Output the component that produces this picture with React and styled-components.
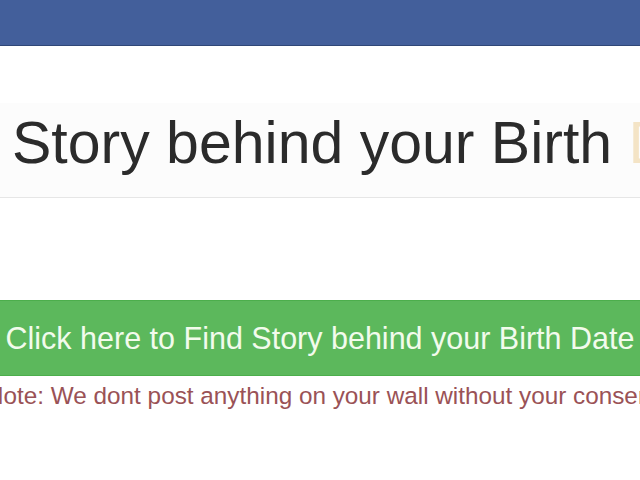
import React from 'react';
import styled, { createGlobalStyle } from 'styled-components';

const GlobalStyle = createGlobalStyle`
    html, body {
        margin: 0;
        padding: 0;
        background: #ffffff;
        overflow: hidden;
    }
    body {
        font-family: "Liberation Sans", Arial, sans-serif;
    }
`;

const Page = styled.div`
    width: 640px;
    height: 480px;
    overflow: hidden;
    background: #ffffff;
`;

const TopBar = styled.div`
    height: 45px;
    background: #435f9b;
    border-bottom: 1px solid #2f4777;
`;

const TitleBox = styled.div`
    margin-top: 57px;
    padding: 7px 0 21px 12px;
    background: #fcfcfc;
    border-bottom: 1px solid #e6e6e6;
    white-space: nowrap;
    overflow: hidden;
    font-size: 59px;
    line-height: 66px;
    color: #2b2b2b;
`;

const Faded = styled.span`
    color: ${props => props.tone};
`;

const FindButton = styled.button`
    display: flex;
    align-items: center;
    justify-content: center;
    width: 100%;
    height: 76px;
    margin-top: 102px;
    padding: 0;
    border: none;
    border-top: 1px solid #4cae4c;
    border-bottom: 1px solid #4cae4c;
    background: #5cb85c;
    color: #f2fbec;
    font-family: "Liberation Sans", Arial, sans-serif;
    font-size: 30.5px;
    white-space: nowrap;
    cursor: pointer;
`;

const Note = styled.div`
    margin: 5px 0 0 -14px;
    white-space: nowrap;
    font-size: 24.3px;
    line-height: 29px;
    color: #9a5256;
`;

export default function App() {
    return (
        <Page>
            <GlobalStyle />
            <TopBar />
            <TitleBox>
                Story behind your Birth <Faded tone="#f4e4c6">Date</Faded>
            </TitleBox>
            <FindButton>Click here to Find Story behind your Birth Date</FindButton>
            <Note>Note: We dont post anything on your wall without your consent</Note>
        </Page>
    );
}
